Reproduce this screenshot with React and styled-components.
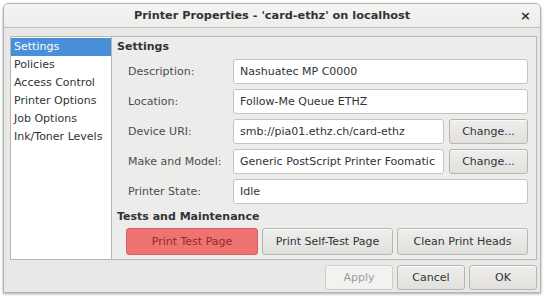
import React from "react";
import styled, { createGlobalStyle } from "styled-components";

const GlobalStyle = createGlobalStyle`
  html, body {
    margin: 0;
    padding: 0;
    background: #ffffff;
  }
  body {
    font-family: "DejaVu Sans", "Liberation Sans", sans-serif;
    font-size: 11px;
    color: #2e3436;
  }
`;

const Page = styled.div`
  padding: 3px 4px 5px 3px;
  width: 545px;
  height: 299px;
  box-sizing: border-box;
`;

const Window = styled.div`
  width: 538px;
  height: 290px;
  box-sizing: border-box;
  border: 1px solid #b3b3b0;
  border-radius: 6px 6px 0 0;
  background: #e8e8e7;
  box-shadow: 0 1px 3px rgba(0, 0, 0, 0.35);
  display: flex;
  flex-direction: column;
  overflow: hidden;
`;

const TitleBar = styled.div`
  height: 23px;
  flex: none;
  background: linear-gradient(#f4f4f3, #ededec);
  border-bottom: 1px solid #bfbfbc;
  display: flex;
  align-items: center;
  justify-content: center;
  position: relative;
  font-weight: bold;
  font-size: 11.3px;
  color: #2e3436;
`;

const Close = styled.span`
  position: absolute;
  right: 9px;
  top: 4px;
  font-size: 13px;
  font-weight: bold;
  color: #2e3436;
`;

const Body = styled.div`
  flex: 1;
  display: flex;
  flex-direction: column;
  padding: 8px 3px 3px 6px;
`;

const Frame = styled.div`
  height: 224px;
  border: 1px solid #b6b6b3;
  display: flex;
  box-sizing: border-box;
`;

const Sidebar = styled.div`
  width: 100px;
  background: #ffffff;
  border-right: 1px solid #b6b6b3;
  padding-top: 1px;
`;

const SideItem = styled.div`
  height: 18px;
  line-height: 17px;
  padding-left: 3px;
  font-size: 11px;
  white-space: nowrap;
  background: ${(p) => (p.active ? "#4a90d9" : "transparent")};
  color: ${(p) => (p.active ? "#ffffff" : "#2e3436")};
`;

const Pane = styled.div`
  flex: 1;
  background: #ececeb;
  padding: 3px 8px 0 5px;
  display: flex;
  flex-direction: column;
`;

const Heading = styled.div`
  font-weight: bold;
  font-size: 11px;
  height: 14px;
  line-height: 14px;
  margin-bottom: 5px;
`;

const Form = styled.div`
  display: grid;
  grid-template-columns: 100px 1fr auto;
  row-gap: 5px;
  column-gap: 5px;
  padding-left: 11px;
  align-items: center;
`;

const Label = styled.div`
  color: #4d4d4d;
  white-space: nowrap;
`;

const Entry = styled.div`
  grid-column: ${(p) => (p.wide ? "2 / 4" : "2 / 3")};
  height: 25px;
  box-sizing: border-box;
  background: #ffffff;
  border: 1px solid #c4c4c1;
  border-radius: 3px;
  padding: 0 6px;
  line-height: 23px;
  white-space: nowrap;
  overflow: hidden;
  color: #2e3436;
`;

const Button = styled.div`
  height: ${(p) => p.h || 25}px;
  box-sizing: border-box;
  border: 1px solid #b5b5b2;
  border-radius: 3px;
  background: linear-gradient(#efeeec, #e1e0dd);
  box-shadow: inset 0 1px #fafafa;
  display: flex;
  align-items: center;
  justify-content: center;
  padding: 0 10px;
  white-space: nowrap;
  color: #2e3436;
`;

const ChangeButton = styled(Button)`
  width: 79px;
  padding: 0;
`;

const TestsHeading = styled(Heading)`
  margin: 6px 0 4px;
`;

const TestRow = styled.div`
  display: grid;
  grid-template-columns: 132px 131px 131px;
  column-gap: 4px;
  padding-left: 9px;
`;

const DangerButton = styled(Button)`
  background: #ef7373;
  border-color: #d66161;
  box-shadow: none;
  color: #962828;
`;

const Actions = styled.div`
  display: flex;
  justify-content: flex-end;
  gap: 4px;
  margin-top: 5px;
`;

const ActionButton = styled(Button)`
  width: 68px;
  padding: 0;
  height: 25px;
  color: ${(p) => (p.disabled ? "#9a9c9c" : "#2e3436")};
  background: ${(p) => (p.disabled ? "#f2f2f1" : "linear-gradient(#efeeec, #e1e0dd)")};
  border-color: ${(p) => (p.disabled ? "#cdcdca" : "#b5b5b2")};
`;

const items = [
  "Settings",
  "Policies",
  "Access Control",
  "Printer Options",
  "Job Options",
  "Ink/Toner Levels",
];

export default function App() {
  return (
    <Page>
      <GlobalStyle />
      <Window>
        <TitleBar>
          Printer Properties - 'card-ethz' on localhost
          <Close>×</Close>
        </TitleBar>
        <Body>
          <Frame>
            <Sidebar>
              {items.map((item, i) => (
                <SideItem key={item} active={i === 0}>
                  {item}
                </SideItem>
              ))}
            </Sidebar>
            <Pane>
              <Heading>Settings</Heading>
              <Form>
                <Label>Description:</Label>
                <Entry wide>Nashuatec MP C0000</Entry>
                <Label>Location:</Label>
                <Entry wide>Follow-Me Queue ETHZ</Entry>
                <Label>Device URI:</Label>
                <Entry>smb://pia01.ethz.ch/card-ethz</Entry>
                <ChangeButton>Change...</ChangeButton>
                <Label>Make and Model:</Label>
                <Entry>Generic PostScript Printer Foomatic</Entry>
                <ChangeButton>Change...</ChangeButton>
                <Label>Printer State:</Label>
                <Entry wide>Idle</Entry>
              </Form>
              <TestsHeading>Tests and Maintenance</TestsHeading>
              <TestRow>
                <DangerButton h={27}>Print Test Page</DangerButton>
                <Button h={27}>Print Self-Test Page</Button>
                <Button h={27}>Clean Print Heads</Button>
              </TestRow>
            </Pane>
          </Frame>
          <Actions>
            <ActionButton disabled>Apply</ActionButton>
            <ActionButton>Cancel</ActionButton>
            <ActionButton>OK</ActionButton>
          </Actions>
        </Body>
      </Window>
    </Page>
  );
}
